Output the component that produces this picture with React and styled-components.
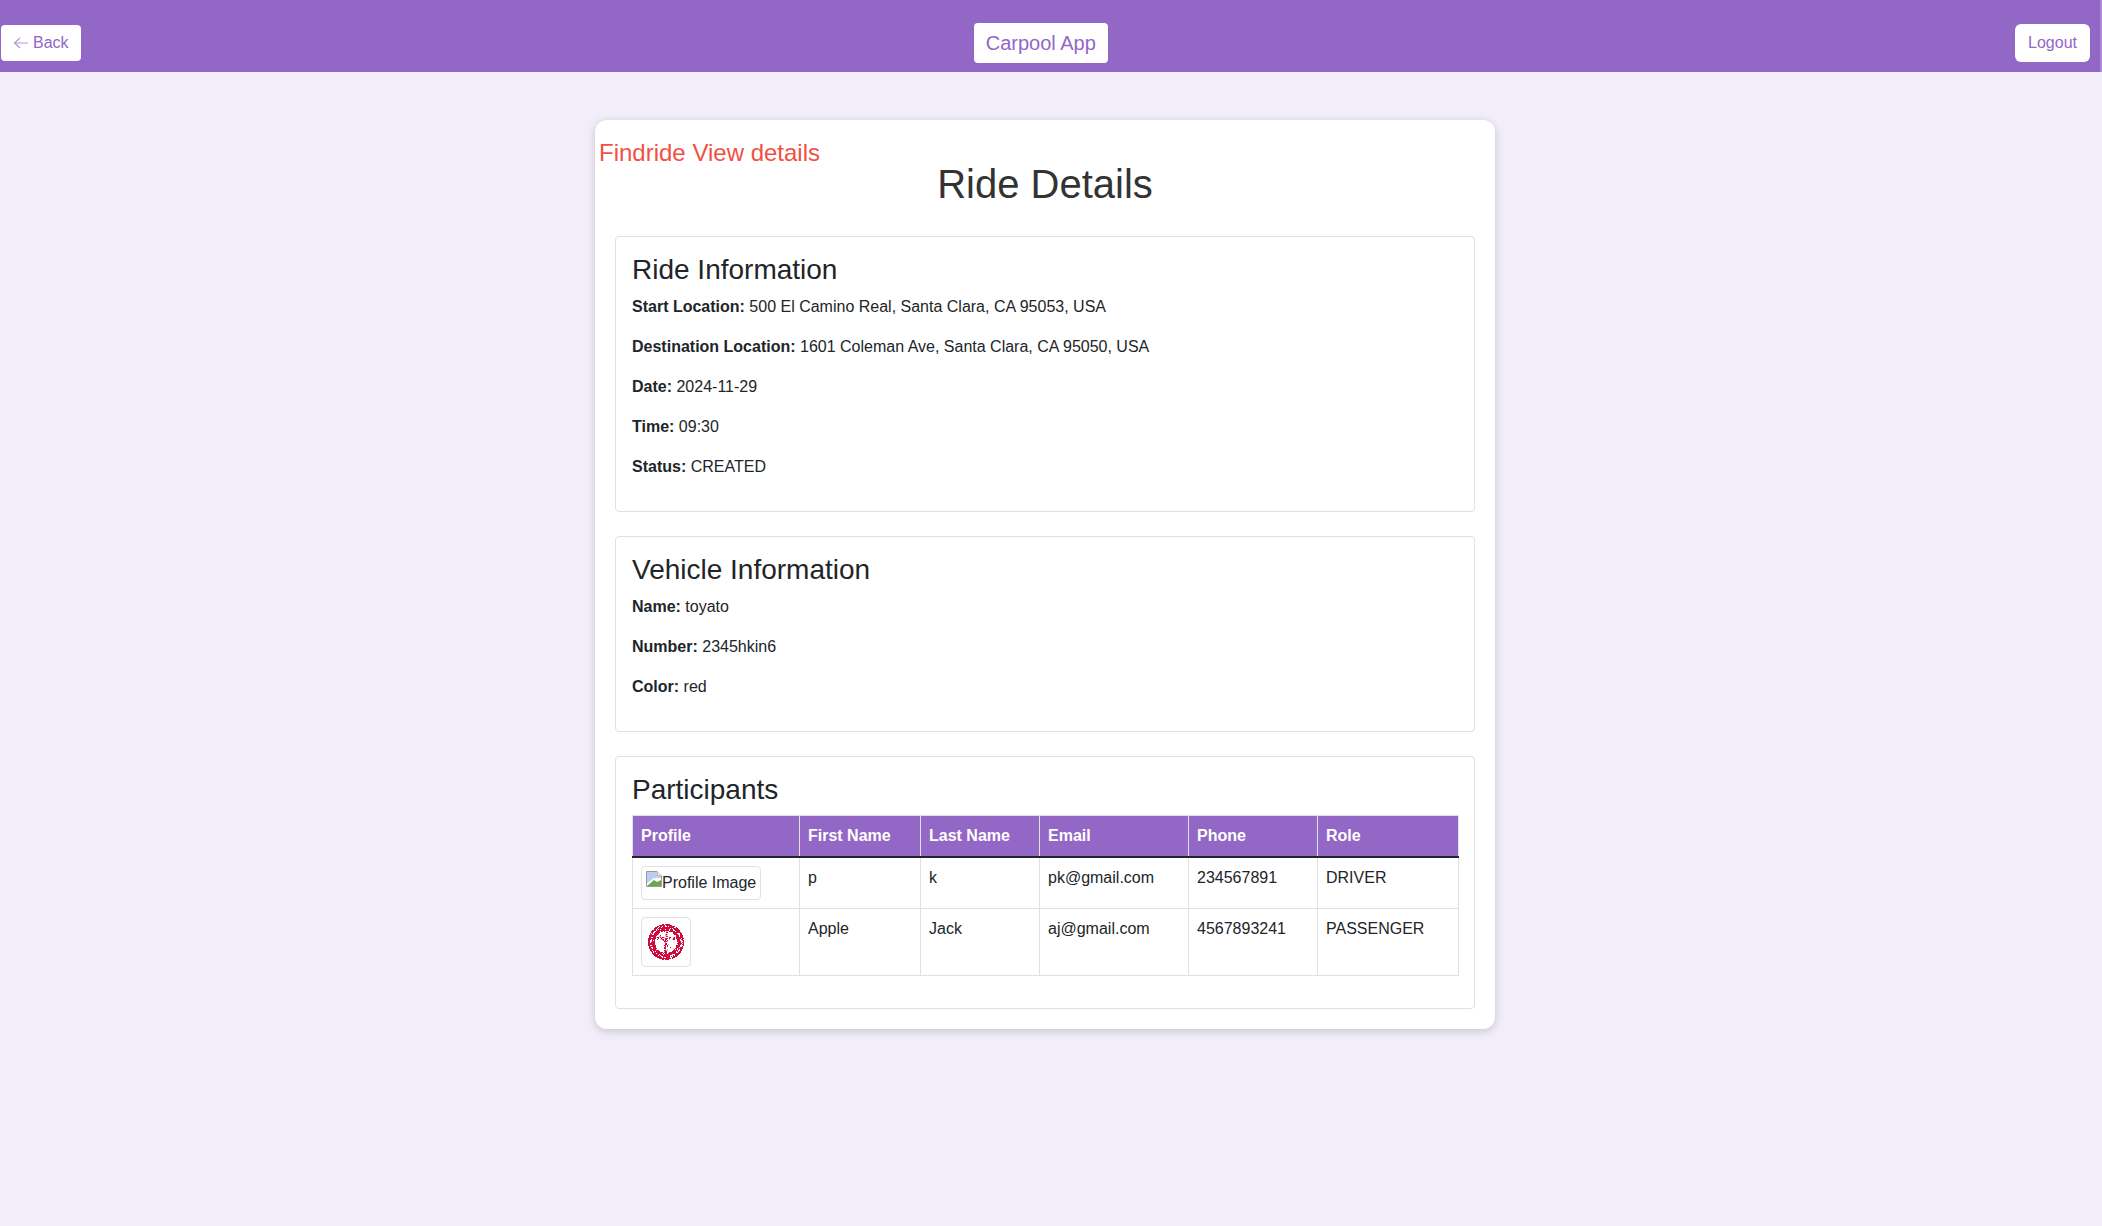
import React from 'react'
import styled, { createGlobalStyle } from 'styled-components'

const PURPLE = '#9367c5'
const TEXT = '#212529'
const LINE = '#dee2e6'

const GlobalStyle = createGlobalStyle`
  * { box-sizing: border-box; }
  html, body { margin: 0; padding: 0; }
  body {
    background: #f1eef9;
    color: ${TEXT};
    font-family: "Liberation Sans", Arial, sans-serif;
    font-size: 16px;
    line-height: 24px;
    min-height: 1226px;
  }
`

const NavBar = styled.header`
  height: 72px;
  background: ${PURPLE};
  display: flex;
  justify-content: space-between;
  align-items: center;
  padding: 14px 10px 0 1px;
  border-right: 2px solid #ab8bd2;
`

const NavButton = styled.button`
  background: #fff;
  color: ${PURPLE};
  border: 0;
  border-radius: 4px;
  font-family: inherit;
  font-size: 16px;
  line-height: 24px;
  height: 36px;
  padding: 0 12px;
  display: flex;
  align-items: center;
  gap: 4px;
`

const LogoutButton = styled(NavButton)`
  height: 38px;
  padding: 0 13px;
  border-radius: 6px;
`

const Brand = styled(NavButton)`
  font-size: 20px;
  height: 40px;
  width: 134px;
  justify-content: center;
  padding: 0;
  margin-right: 14px;
`

const Main = styled.main`
  display: flex;
  justify-content: center;
  padding: 48px 12px 0 0;
`

const Card = styled.div`
  width: 900px;
  height: 909px;
  background: #fff;
  border-radius: 12px;
  box-shadow: 0 2px 8px rgba(0, 0, 0, 0.18);
  padding: 17px 20px 0;
`

const Crumb = styled.div`
  color: #ef5144;
  font-size: 24px;
  line-height: 32px;
  margin-left: -16px;
`

const Title = styled.h1`
  margin: -9px 0 28px;
  font-size: 40px;
  font-weight: 400;
  line-height: 48px;
  color: #333;
  text-align: center;
`

const Section = styled.section`
  border: 1px solid ${LINE};
  border-radius: 4px;
  padding: 16px;
  margin-bottom: 24px;
  height: ${(props) => props.$height}px;
`

const SectionTitle = styled.h3`
  margin: 0 0 8px;
  font-size: 28px;
  font-weight: 400;
  line-height: 33.6px;
  color: ${TEXT};
`

const Field = styled.p`
  margin: 0 0 16px;
  b { font-weight: 700; }
`

const Table = styled.table`
  width: 826px;
  border-collapse: collapse;
  table-layout: fixed;
  margin-top: 4px;
  th, td {
    border: 1px solid ${LINE};
    padding: 8px;
    text-align: left;
    vertical-align: top;
  }
  th {
    background: ${PURPLE};
    color: #fff;
    font-weight: 700;
    border-bottom: 2px solid #212529;
  }
`

const Thumb = styled.div`
  display: inline-flex;
  align-items: flex-start;
  border: 1px solid ${LINE};
  border-radius: 4px;
  padding: 4px;
  background: #fff;
  height: ${(props) => (props.$tall ? 50 : 34)}px;
  vertical-align: top;
`

const columns = [167, 121, 119, 149, 129, 141]
const headers = ['Profile', 'First Name', 'Last Name', 'Email', 'Phone', 'Role']

const ArrowLeft = () => (
  <svg width="16" height="12" viewBox="0 0 16 12" fill="none" stroke="#b497da" strokeWidth="1.2">
    <path d="M1 6H15M7 1L1.5 6 7 11" />
  </svg>
)

const BrokenImage = () => (
  <svg width="16" height="16" viewBox="0 0 16 16">
    <path d="M0.5 0.5H11L15.5 5V15.5H0.5Z" fill="#fff" stroke="#9a9a9a" />
    <path d="M11 0.5V5H15.5" fill="#ececec" stroke="#9a9a9a" />
    <path d="M1 1H10.5V5.5H15V7L8 7 1 12Z" fill="#b9cdf0" />
    <path d="M1 15L8 9 11 11 15 9V15Z" fill="#6aa84a" />
  </svg>
)

// speckled pixels of the low-res seal, the same on every render
const sealPixels = () => {
  const pixels = []
  for (let y = 0; y < 40; y++) {
    for (let x = 0; x < 40; x++) {
      const r = Math.hypot(x - 19.5, y - 19.5)
      const noise = Math.abs(Math.sin(x * 12.9898 + y * 78.233) * 43758.5453) % 1
      const inRing = r <= 18 && r >= 11
      const speck = Math.abs(r - 15) < 1 ? 0.55 : 0.9
      const inner = r < 11 && (Math.abs(y - 16) < 1.5 || Math.abs(x - 19.5) < 2 || Math.abs(x - y) < 2)
      if ((inRing && noise < speck) || (inner && noise < 0.5)) {
        pixels.push({ x, y, fill: noise < 0.2 && inner ? '#ee9ab0' : '#cf0a3c' })
      }
    }
  }
  return pixels
}

const Seal = () => (
  <svg width="40" height="40" viewBox="0 0 40 40" shapeRendering="crispEdges">
    {sealPixels().map((p) => (
      <rect key={`${p.x}-${p.y}`} x={p.x} y={p.y} width="1" height="1" fill={p.fill} />
    ))}
  </svg>
)

export default function App() {
  return (
    <>
      <GlobalStyle />
      <NavBar>
        <NavButton><ArrowLeft />Back</NavButton>
        <Brand>Carpool App</Brand>
        <LogoutButton>Logout</LogoutButton>
      </NavBar>
      <Main>
        <Card>
          <Crumb>Findride View details</Crumb>
          <Title>Ride Details</Title>
          <Section $height={276}>
            <SectionTitle>Ride Information</SectionTitle>
            <Field><b>Start Location:</b> 500 El Camino Real, Santa Clara, CA 95053, USA</Field>
            <Field><b>Destination Location:</b> 1601 Coleman Ave, Santa Clara, CA 95050, USA</Field>
            <Field><b>Date:</b> 2024-11-29</Field>
            <Field><b>Time:</b> 09:30</Field>
            <Field><b>Status:</b> CREATED</Field>
          </Section>
          <Section $height={196}>
            <SectionTitle>Vehicle Information</SectionTitle>
            <Field><b>Name:</b> toyato</Field>
            <Field><b>Number:</b> 2345hkin6</Field>
            <Field><b>Color:</b> red</Field>
          </Section>
          <Section $height={253}>
            <SectionTitle>Participants</SectionTitle>
            <Table>
              <colgroup>
                {columns.map((width, index) => <col key={index} width={width} />)}
              </colgroup>
              <thead>
                <tr>{headers.map((name) => <th key={name}>{name}</th>)}</tr>
              </thead>
              <tbody>
                <tr>
                  <td><Thumb><BrokenImage />Profile Image</Thumb></td>
                  <td>p</td>
                  <td>k</td>
                  <td>pk@gmail.com</td>
                  <td>234567891</td>
                  <td>DRIVER</td>
                </tr>
                <tr>
                  <td><Thumb $tall><Seal /></Thumb></td>
                  <td>Apple</td>
                  <td>Jack</td>
                  <td>aj@gmail.com</td>
                  <td>4567893241</td>
                  <td>PASSENGER</td>
                </tr>
              </tbody>
            </Table>
          </Section>
        </Card>
      </Main>
    </>
  )
}
